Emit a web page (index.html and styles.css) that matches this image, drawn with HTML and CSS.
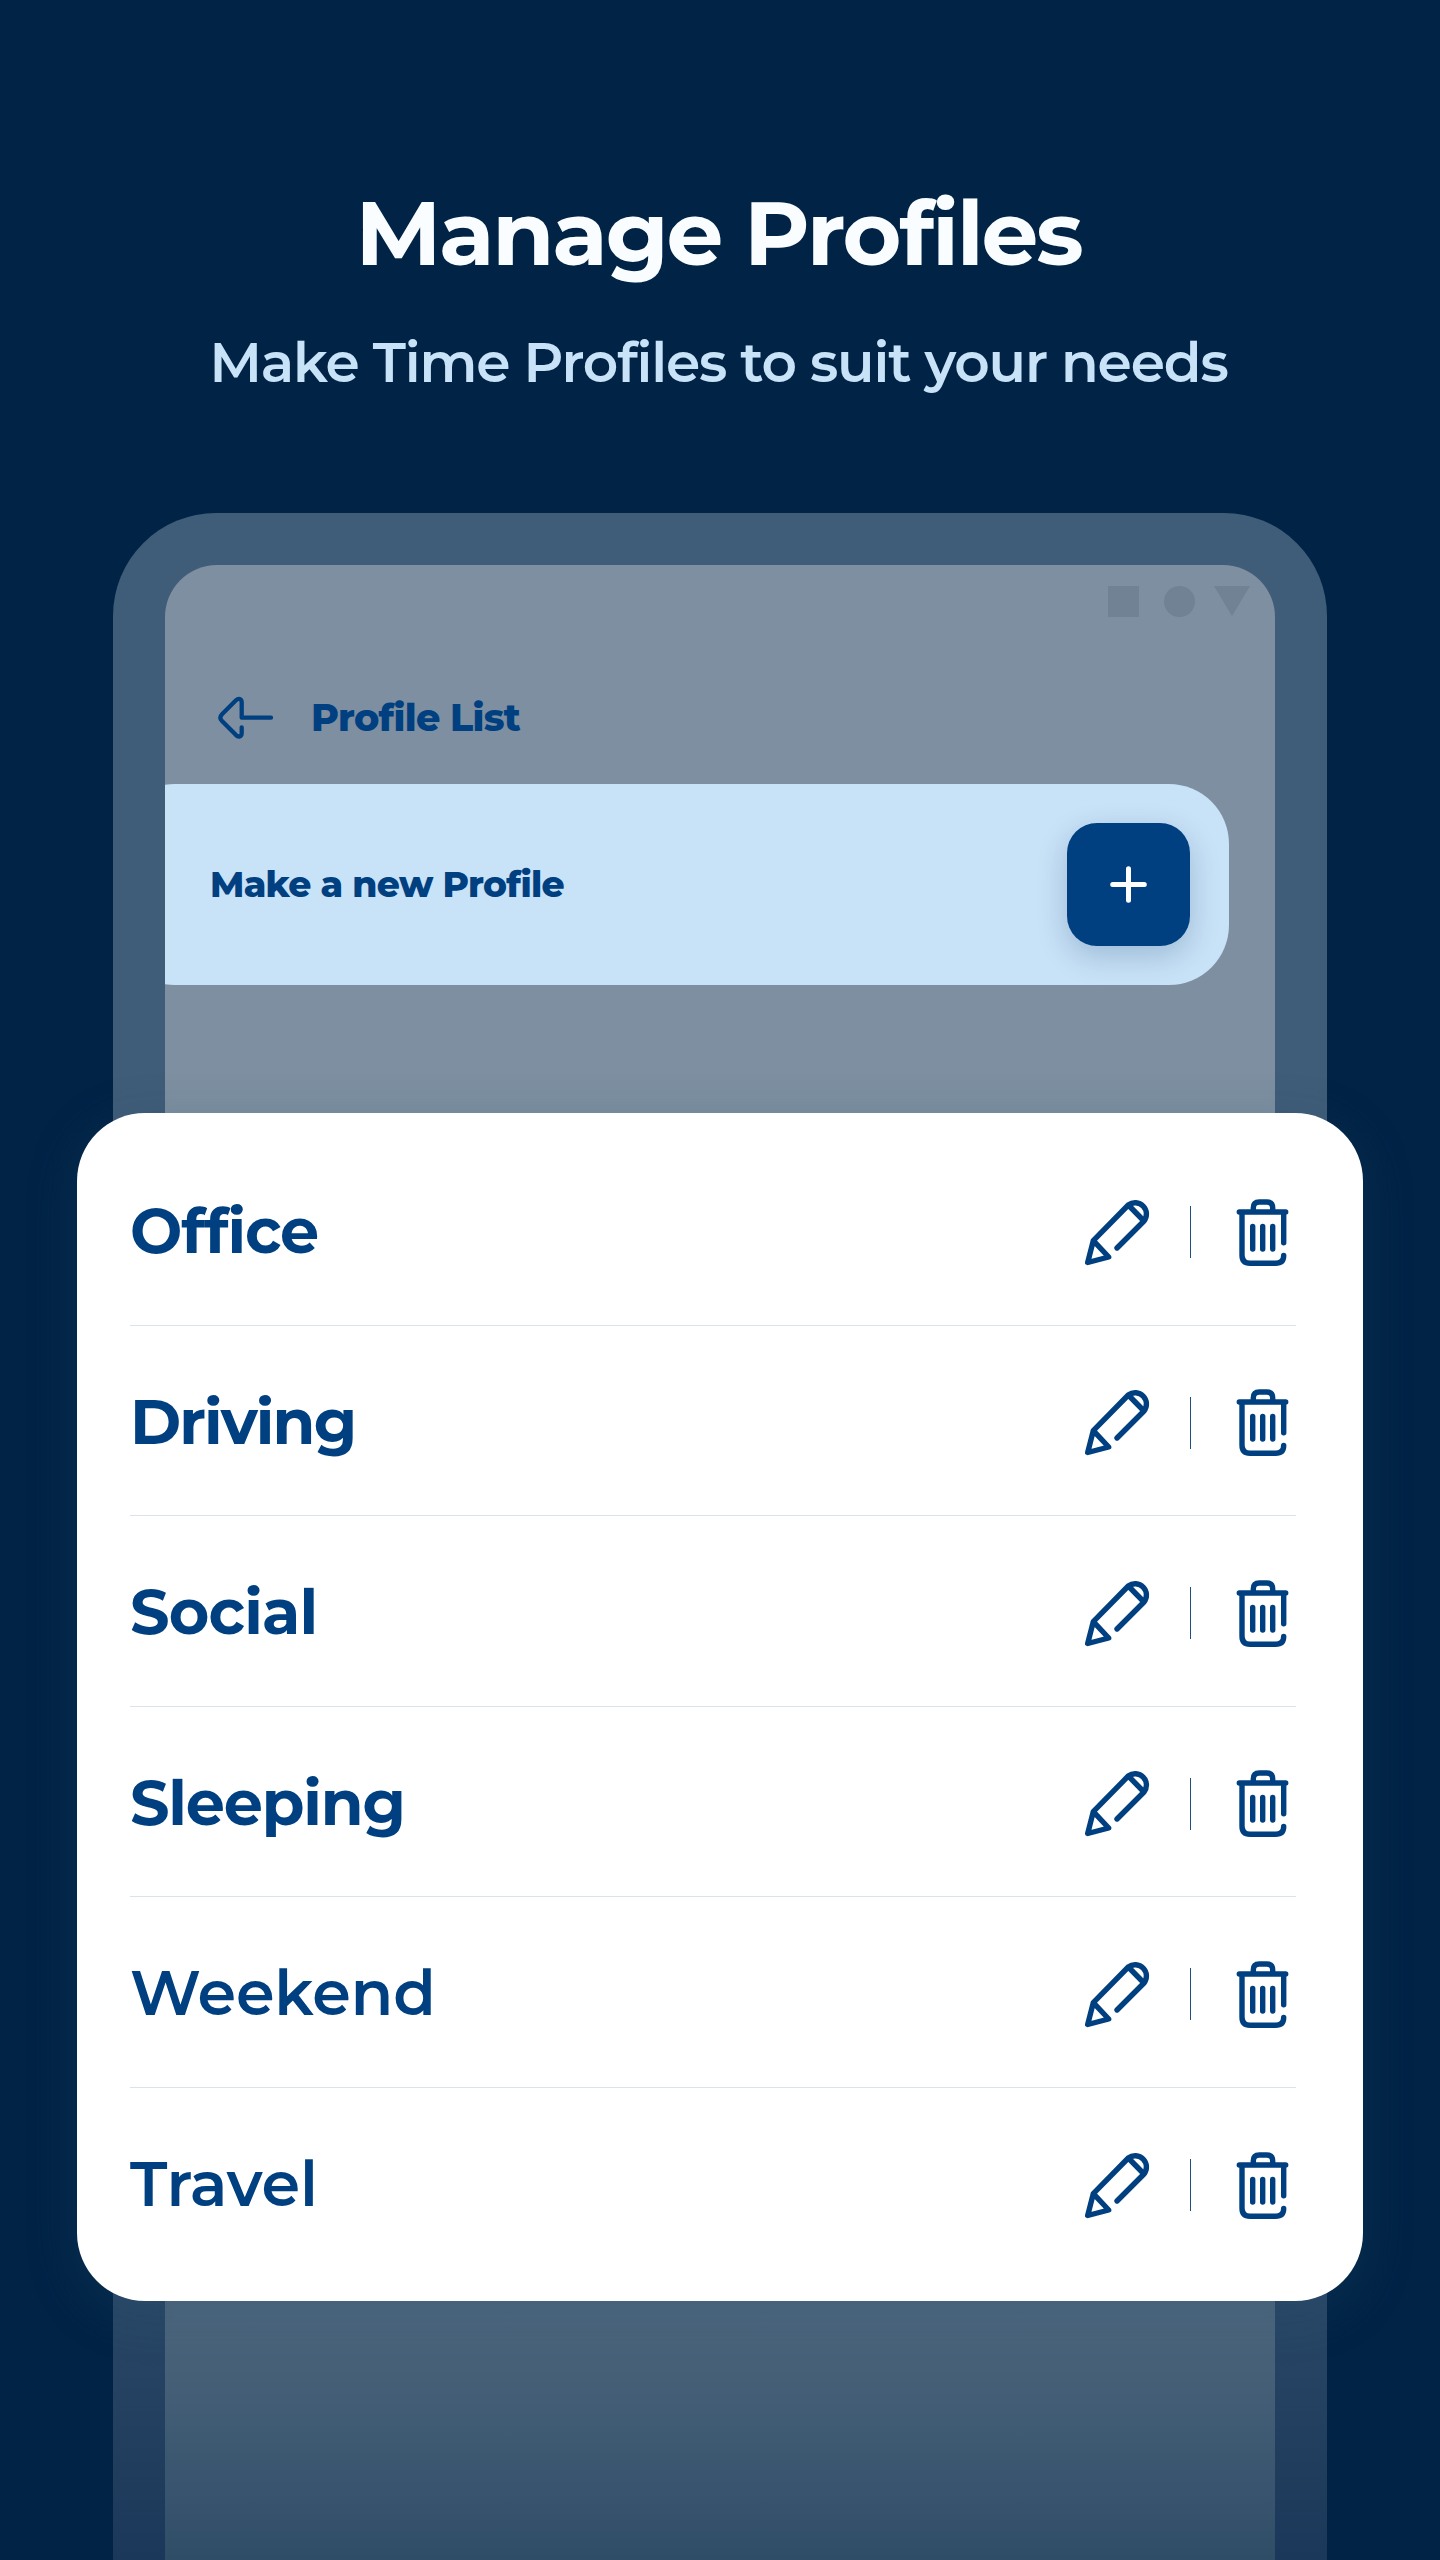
FILE: index.html
```html
<!DOCTYPE html>
<html lang="en">
<head>
    <meta charset="UTF-8">
    <meta name="viewport" content="width=device-width, initial-scale=1.0">
    <title>Manage Profiles</title>
    <link rel="stylesheet" href="styles.css">
</head>
<body>
    <header class="intro">
        <h1>Manage Profiles</h1>
        <p>Make Time Profiles to suit your needs</p>
    </header>

    <main class="phone">
        <div class="screen">
            <div class="status-bar">
                <svg width="142" height="31" viewBox="0 0 142 31">
                    <rect width="31" height="31"/>
                    <circle cx="71.500" cy="15.500" r="15.500"/>
                    <path d="M106 0h36l-18 30z"/>
                </svg>
            </div>
            <div class="toolbar">
                <svg class="back" width="56" height="43" viewBox="0 0 56 43">
                    <path d="M53 21.700H23.700V6.500C23.700 2.600 20.500 1.800 18 4.200L4 18.300C1.800 20.600 1.800 22.800 4 25L18 39.100C20.500 41.500 23.700 40.700 23.700 37V31.300"/>
                </svg>
                <h2>Profile List</h2>
            </div>
            <div class="new-profile">
                <p>Make a new Profile</p>
                <button class="add" aria-label="Add">
                    <svg width="37" height="37" viewBox="0 0 37 37">
                        <path d="M18.500 2.700v31.600M2.700 18.500h31.600"/>
                    </svg>
                </button>
            </div>
        </div>
    </main>

    <ul class="profiles" id="profiles"></ul>

    <template id="profile-row">
        <li class="profile">
            <span class="name"></span>
            <svg class="icon" width="66" height="67" viewBox="0 0 66 67">
                <path d="M32 49L59 22A11.300 11.300 0 0 0 43.300 6L8.300 41.700L2.700 63.500L23.700 58L8.300 41.700M43.300 6L59 22"/>
            </svg>
            <span class="separator"></span>
            <svg class="icon" width="51" height="67" viewBox="0 0 51 67">
                <path d="M2.300 13H48.700M16.300 13V9Q16.300 3 22.300 3H29.700Q35.700 3 35.700 9V13M46.700 13V43.700M5 13V56Q5 64.300 13 64.300H38.500Q46.700 64.300 46.700 56.500M15.700 27.500V50M25.700 27.500V50M35.700 27.500V50"/>
            </svg>
        </li>
    </template>

    <script>
        const names = ['Office', 'Driving', 'Social', 'Sleeping', 'Weekend', 'Travel'];
        const list = document.getElementById('profiles');
        const row = document.getElementById('profile-row');

        names.forEach(name => {
            const item = row.content.cloneNode(true);
            item.querySelector('.name').textContent = name;
            list.appendChild(item);
        });
    </script>
</body>
</html>
```

FILE: styles.css
```css
* {
    box-sizing: border-box;
    margin: 0;
    padding: 0;
}

body {
    position: relative;
    height: 2560px;
    overflow: hidden;
    font-family: "Montserrat", "Inter", sans-serif;
    background-color: #002346;
    color: #004080;
}

.intro {
    height: 513px;
    padding: 180px 3px 0 0;
    text-align: center;
}

.intro h1 {
    font-size: 90px;
    line-height: 106px;
    font-weight: 700;
    letter-spacing: -2.3px;
    color: #f9fdff;
}

.intro p {
    margin-top: 44px;
    font-size: 55px;
    line-height: 66px;
    font-weight: 600;
    letter-spacing: -1.13px;
    color: #c8e2f7;
}

/* Phone */
.phone {
    width: 1214px;
    height: 2047px;
    margin: 0 auto;
    padding: 52px 52px 0;
    border-radius: 103px 103px 0 0;
    background: linear-gradient(#3f5c78 1400px, #1b385a 2047px);
}

.screen {
    height: 1995px;
    overflow: hidden;
    border-radius: 52px 52px 0 0;
    background: linear-gradient(#7d8fa0 1330px, #304d68 1995px);
}

.status-bar {
    display: flex;
    justify-content: flex-end;
    height: 113px;
    padding: 21px 25px 0;
    fill: #708294;
}

.toolbar {
    display: flex;
    align-items: center;
    gap: 37px;
    height: 79px;
    margin-bottom: 27px;
    padding-left: 53px;
}

.toolbar h2 {
    font-size: 38px;
    font-weight: 800;
    letter-spacing: -0.7px;
}

.back {
    fill: none;
    stroke: #004080;
    stroke-width: 4.3;
    stroke-linecap: round;
    stroke-linejoin: round;
}

.new-profile {
    display: flex;
    align-items: center;
    justify-content: space-between;
    width: 1114px;
    height: 201px;
    margin-left: -50px;
    padding: 0 39px 0 95px;
    border-radius: 60px;
    background-color: #c8e2f7;
}

.new-profile p {
    padding-bottom: 2px;
    font-size: 36px;
    font-weight: 800;
    letter-spacing: -0.7px;
}

.add {
    display: flex;
    align-items: center;
    justify-content: center;
    width: 123px;
    height: 123px;
    border: none;
    border-radius: 30px;
    background-color: #004080;
    box-shadow: 0 10px 30px rgba(0, 50, 100, 0.22);
}

.add path {
    stroke: #fff;
    stroke-width: 5;
    stroke-linecap: round;
}

/* Profile list */
.profiles {
    position: absolute;
    top: 1113px;
    left: 77px;
    width: 1286px;
    height: 1188px;
    padding: 22px 67px 0 53px;
    list-style: none;
    border-radius: 68px;
    background-color: #fff;
    box-shadow: 0 12px 50px rgba(34, 82, 110, 0.25);
}

.profile {
    display: flex;
    align-items: center;
    height: 190.5px;
    padding-top: 5px;
    border-bottom: 1px solid #dbe2ea;
}

.profile:last-child {
    border-bottom: none;
}

.name {
    margin-right: auto;
    padding-bottom: 2px;
    font-size: 62px;
    font-weight: 700;
    letter-spacing: -1.2px;
}

.profile:nth-child(2) .name {
    letter-spacing: -1.9px;
}

.profile:nth-child(3) .name {
    letter-spacing: -0.8px;
}

.profile:nth-child(n+5) .name {
    font-weight: 600;
    letter-spacing: -0.1px;
}

.icon {
    overflow: visible;
    fill: none;
    stroke: #004080;
    stroke-width: 5.4;
    stroke-linecap: round;
    stroke-linejoin: round;
}

.icon:last-child {
    margin-right: 8px;
}

.separator {
    width: 1px;
    height: 52px;
    margin: 0 46px 0 39px;
    background-color: #1f4f80;
}
```
